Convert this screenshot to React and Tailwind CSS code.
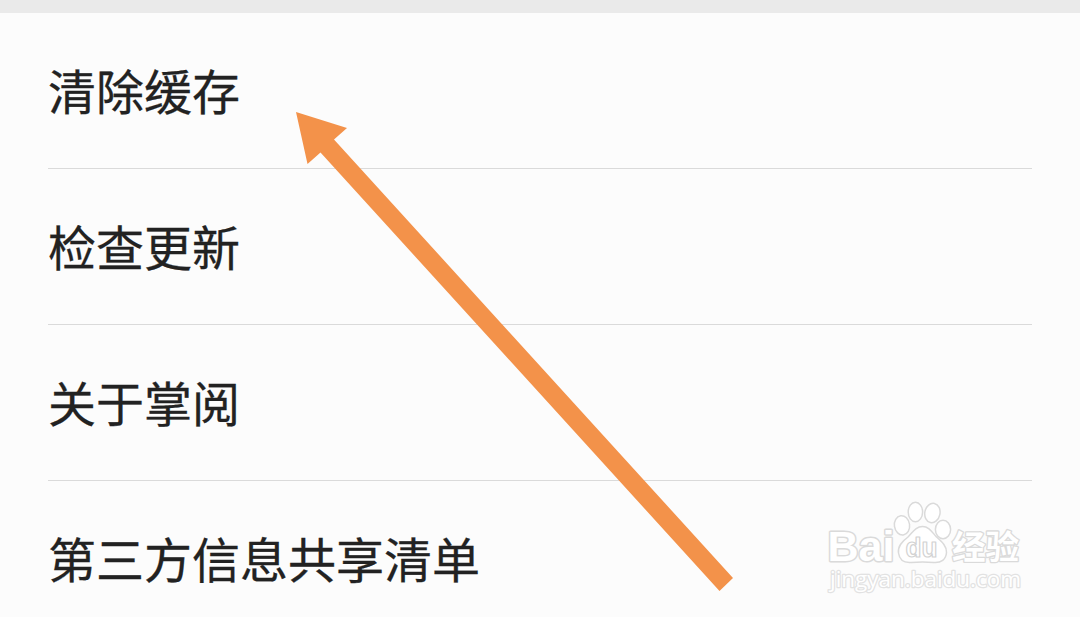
import React from "react";

const menuItems = [
  { id: "cache", label: "清除缓存" },
  { id: "update", label: "检查更新" },
  { id: "about", label: "关于掌阅" },
  { id: "sharing", label: "第三方信息共享清单" },
];

const PointerArrow = () => (
  <svg
    className="absolute left-[290px] top-[106px] pointer-events-none"
    width="450"
    height="492"
    viewBox="290 106 450 492"
  >
    <path
      d="M296 112 L347 128 L334 139.5 L733 578 L719.5 591 L320.5 152.5 L307.5 164 Z"
      fill="#f3924a"
    />
  </svg>
);

const Watermark = () => (
  <svg
    className="absolute left-[815px] top-[490px] pointer-events-none"
    width="220"
    height="120"
    viewBox="0 0 220 120"
    fill="#ffffff"
    stroke="#dadada"
    strokeLinejoin="round"
  >
    {/* paw */}
    <g strokeWidth="1.5">
      <ellipse cx="100.4" cy="22" rx="7.2" ry="9.8" />
      <ellipse cx="117.4" cy="23" rx="7.6" ry="9.7" transform="rotate(12 117.4 23)" />
      <ellipse cx="87" cy="35.3" rx="7.6" ry="9.7" transform="rotate(-8 87 35.3)" />
      <ellipse cx="128" cy="39.5" rx="7.6" ry="9.3" />
      <path d="M107.5 36.5 C101 36.5 98 42 93 47 C87 51.5 82.5 56 83.5 63 C84.5 70 89 73 96 72.5 C103 71.8 112 71.8 119 72.5 C126 73 131 69.5 131.5 62.5 C132 56 126.5 51.5 121.5 47 C117 42 114 36.5 107.5 36.5 Z" />
    </g>
    <text
      className="font-bold font-['Liberation_Sans',sans-serif]"
      x="12.5"
      y="71"
      fontSize="43"
      textLength="67"
      lengthAdjust="spacingAndGlyphs"
      paintOrder="stroke"
      strokeWidth="3"
    >
      Bai
    </text>
    <text
      className="font-bold font-['Liberation_Sans',sans-serif]"
      x="90.5"
      y="66.5"
      fontSize="27"
      textLength="32"
      lengthAdjust="spacingAndGlyphs"
      stroke="#d2d2d2"
      strokeWidth="1.2"
    >
      du
    </text>
    <text
      className="font-bold font-['Noto_Sans_CJK_SC',sans-serif]"
      x="137"
      y="68.5"
      fontSize="33"
      textLength="67"
      lengthAdjust="spacingAndGlyphs"
      paintOrder="stroke"
      strokeWidth="2.6"
    >
      经验
    </text>
    <text
      className="font-['Open_Sans',sans-serif]"
      x="15"
      y="97"
      fontSize="21"
      textLength="191"
      lengthAdjust="spacingAndGlyphs"
      paintOrder="stroke"
      stroke="#e2e2e2"
      strokeWidth="2.4"
    >
      jingyan.baidu.com
    </text>
  </svg>
);

const App = () => {
  return (
    <div className="relative h-[617px] w-[1080px] overflow-hidden bg-[#fcfcfc] font-['Noto_Sans_CJK_SC',sans-serif] text-[#222222]">
      <div className="h-[13px] bg-[#eaeaea]" />
      <ul className="px-12">
        {menuItems.map((item) => (
          <li
            key={item.id}
            className="flex h-[156px] items-center border-b border-[#dadada] pb-1 text-5xl last:border-transparent"
          >
            <span className="whitespace-nowrap [-webkit-text-stroke:0.3px_#222222]">
              {item.label}
            </span>
          </li>
        ))}
      </ul>
      <PointerArrow />
      <Watermark />
    </div>
  );
};

export default App;
